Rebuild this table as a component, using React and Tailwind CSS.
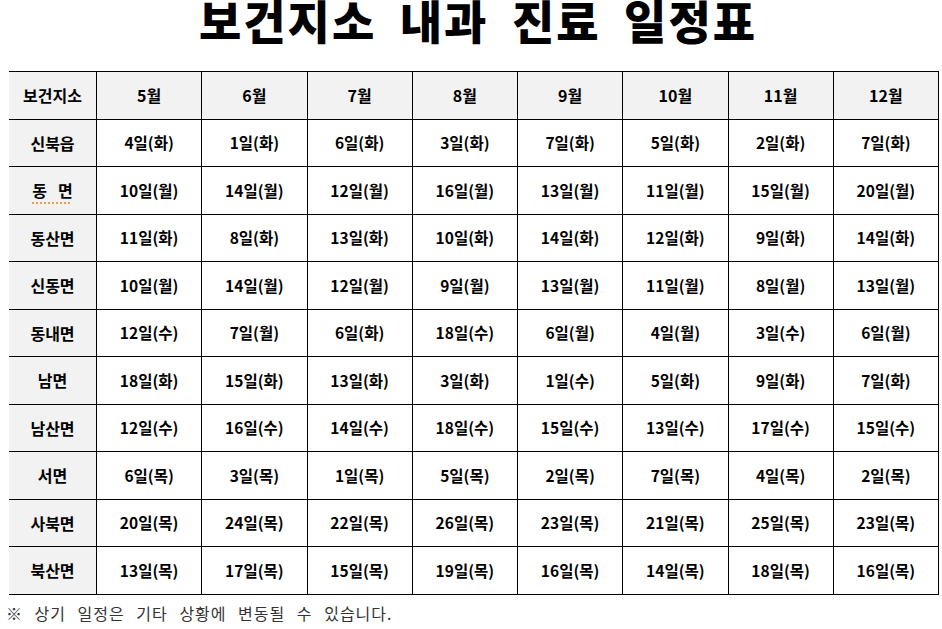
import React from "react";

const months = ["5월", "6월", "7월", "8월", "9월", "10월", "11월", "12월"];
const rows = [
  ["신북읍", ["4일(화)", "1일(화)", "6일(화)", "3일(화)", "7일(화)", "5일(화)", "2일(화)", "7일(화)"]],
  ["동 면", ["10일(월)", "14일(월)", "12일(월)", "16일(월)", "13일(월)", "11일(월)", "15일(월)", "20일(월)"]],
  ["동산면", ["11일(화)", "8일(화)", "13일(화)", "10일(화)", "14일(화)", "12일(화)", "9일(화)", "14일(화)"]],
  ["신동면", ["10일(월)", "14일(월)", "12일(월)", "9일(월)", "13일(월)", "11일(월)", "8일(월)", "13일(월)"]],
  ["동내면", ["12일(수)", "7일(월)", "6일(화)", "18일(수)", "6일(월)", "4일(월)", "3일(수)", "6일(월)"]],
  ["남면", ["18일(화)", "15일(화)", "13일(화)", "3일(화)", "1일(수)", "5일(화)", "9일(화)", "7일(화)"]],
  ["남산면", ["12일(수)", "16일(수)", "14일(수)", "18일(수)", "15일(수)", "13일(수)", "17일(수)", "15일(수)"]],
  ["서면", ["6일(목)", "3일(목)", "1일(목)", "5일(목)", "2일(목)", "7일(목)", "4일(목)", "2일(목)"]],
  ["사북면", ["20일(목)", "24일(목)", "22일(목)", "26일(목)", "23일(목)", "21일(목)", "25일(목)", "23일(목)"]],
  ["북산면", ["13일(목)", "17일(목)", "15일(목)", "19일(목)", "16일(목)", "14일(목)", "18일(목)", "16일(목)"]],
];

const font = { fontFamily: '"Noto Sans CJK KR", "Noto Sans", sans-serif' };

export default function App() {
  return (
    <div className="w-[942px] h-[629px] bg-white text-black overflow-hidden" style={font}>
      <div className="ml-[9px] w-[930px] flex flex-col">
        <div className="h-[71px] pl-[8px] flex flex-col">
          <h1 className="text-center text-[46px] font-black leading-[38px] tracking-[2px] [word-spacing:11px]">
            보건지소 내과 진료 일정표
          </h1>
        </div>
        <div className="grid grid-cols-[88px_repeat(8,1fr)] border-t border-black">
          <div className="h-[47.5px] flex items-center justify-center bg-[#f2f2f2] border-r border-b border-black text-[16px] font-bold">
            보건지소
          </div>
          {months.map((m) => (
            <div
              key={m}
              className="h-[47.5px] flex items-center justify-center bg-[#f2f2f2] border-r border-b border-black text-[16px] font-bold"
            >
              {m}
            </div>
          ))}
          {rows.map(([name, vals]) => (
            <React.Fragment key={name}>
              <div className="h-[47.5px] flex items-center justify-center bg-[#f2f2f2] border-r border-b border-black text-[16px] font-bold">
                {name === "동 면" ? (
                  <span className="whitespace-pre underline decoration-dotted decoration-[#e8891c] underline-offset-[5px]">
                    {"동   면"}
                  </span>
                ) : (
                  name
                )}
              </div>
              {vals.map((v, j) => (
                <div
                  key={j}
                  className="h-[47.5px] flex items-center justify-center border-r border-b border-black text-[15.5px] font-bold"
                >
                  {v}
                </div>
              ))}
            </React.Fragment>
          ))}
        </div>
      </div>
      <p className="ml-[6px] mt-[8px] text-[16px] leading-[20px] text-[#333] tracking-[1px] [word-spacing:7px]">
        ※ 상기 일정은 기타 상황에 변동될 수 있습니다.
      </p>
    </div>
  );
}
